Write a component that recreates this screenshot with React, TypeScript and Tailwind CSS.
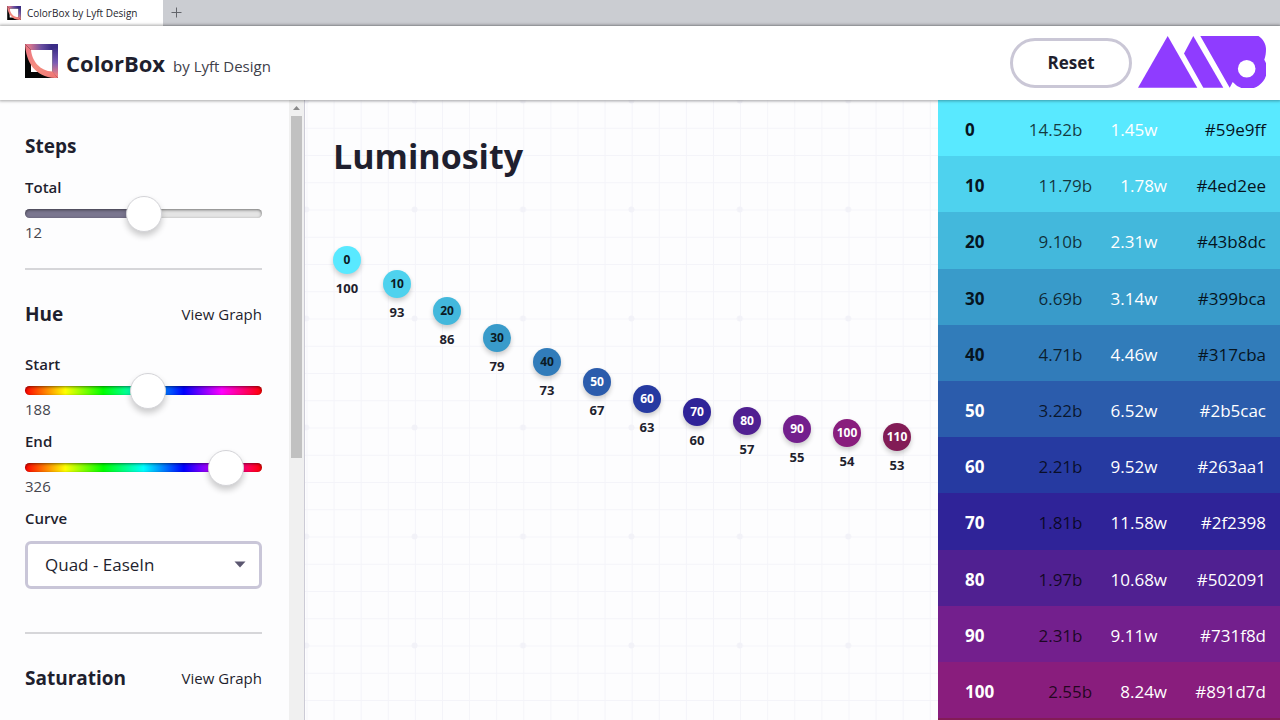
import { useId, useState } from "react";

type Step = {
  name: string;
  value: number;
  x: number;
  y: number;
  hex: string;
  black?: string;
  white?: string;
  light?: boolean;
};

const steps: Step[] = [
  { name: "0", value: 100, x: 42, y: 160, hex: "#59e9ff", black: "14.52", white: "1.45" },
  { name: "10", value: 93, x: 92, y: 184, hex: "#4ed2ee", black: "11.79", white: "1.78" },
  { name: "20", value: 86, x: 142, y: 211, hex: "#43b8dc", black: "9.10", white: "2.31" },
  { name: "30", value: 79, x: 192, y: 238, hex: "#399bca", black: "6.69", white: "3.14" },
  { name: "40", value: 73, x: 242, y: 262, hex: "#317cba", black: "4.71", white: "4.46" },
  { name: "50", value: 67, x: 292, y: 282, hex: "#2b5cac", black: "3.22", white: "6.52", light: true },
  { name: "60", value: 63, x: 342, y: 299, hex: "#263aa1", black: "2.21", white: "9.52", light: true },
  { name: "70", value: 60, x: 392, y: 312, hex: "#2f2398", black: "1.81", white: "11.58", light: true },
  { name: "80", value: 57, x: 442, y: 321, hex: "#502091", black: "1.97", white: "10.68", light: true },
  { name: "90", value: 55, x: 492, y: 329, hex: "#731f8d", black: "2.31", white: "9.11", light: true },
  { name: "100", value: 54, x: 542, y: 333, hex: "#891d7d", black: "2.55", white: "8.24", light: true },
  { name: "110", value: 53, x: 592, y: 337, hex: "#821c56", light: true },
];

function Logo({ className }: { className: string }) {
  const id = useId();
  return (
    <svg viewBox="0 0 33 34" className={className} aria-hidden="true">
      <defs>
        <linearGradient id={`${id}a`} x1="0" y1="0" x2="1" y2="0">
          <stop offset="0.12" stopColor="#e0788c" />
          <stop offset="0.5" stopColor="#6a4fa0" />
          <stop offset="0.8" stopColor="#3a2c86" />
        </linearGradient>
        <linearGradient id={`${id}b`} x1="0" y1="0" x2="0" y2="1">
          <stop offset="0.1" stopColor="#3a2c86" />
          <stop offset="0.55" stopColor="#7a5cb4" />
          <stop offset="0.9" stopColor="#ec7f84" />
        </linearGradient>
        <linearGradient id={`${id}c`} x1="0" y1="0" x2="1" y2="1">
          <stop offset="0" stopColor="#ea7080" />
          <stop offset="0.5" stopColor="#f58e80" />
          <stop offset="1" stopColor="#ee7474" />
        </linearGradient>
      </defs>
      <rect width="33" height="34" fill="#050505" />
      <rect x="6" y="6" width="21.5" height="22" fill="#fff" />
      <path d="M0 0H33V6H6Z" fill={`url(#${id}a)`} />
      <path d="M33 0V34L27.5 28V6Z" fill={`url(#${id}b)`} />
      <path d="M0 0L6 6C7 17 15 27 27.5 27.5L33 34H30C10 33 1 18 0 0Z" fill={`url(#${id}c)`} />
    </svg>
  );
}

function BrandMark() {
  return (
    <svg viewBox="0 0 128 52" className="mb-0.5 h-[52px] w-32 shrink-0" aria-hidden="true">
      <g fill="#8f3cff">
        <path d="M29.7 0L59.3 51.7H0Z" />
        <path d="M55.3 0L85.3 51.7H65.3L46 17.5Z" />
        <path d="M62.3 0H120.5C125 3 128 8 128 13C128 17 127.6 20 126.3 23.7A19.4 19.4 0 0 1 94.7 46L91.7 51.7Z" />
      </g>
      <circle cx="108.7" cy="32.7" r="8.8" fill="#fff" />
    </svg>
  );
}

const trackFills = {
  hue: "bg-[linear-gradient(to_right,#f00,#ff0_17%,#0f0_33%,#0ff_50%,#00f_67%,#f0f_83%,#f00)]",
  plain: "bg-[linear-gradient(to_right,#7a768f_50%,#e4e4e4_50%)]",
};

type SliderProps = {
  label: string;
  initial: number;
  min: number;
  max: number;
  fill: keyof typeof trackFills;
};

function Slider({ label, initial, min, max, fill }: SliderProps) {
  const id = useId();
  const [value, setValue] = useState(initial);
  return (
    <div className="flex flex-col">
      <label htmlFor={id} className="text-[15px] leading-5 font-semibold">
        {label}
      </label>
      <input
        id={id}
        type="range"
        min={min}
        max={max}
        value={value}
        onChange={(e) => setValue(Number(e.target.value))}
        className={`mt-3 block h-[9px] w-full appearance-none rounded-full shadow-[inset_0_1px_3px_rgba(0,0,0,0.5)] outline-none [&::-webkit-slider-thumb]:size-9 [&::-webkit-slider-thumb]:appearance-none [&::-webkit-slider-thumb]:rounded-full [&::-webkit-slider-thumb]:border [&::-webkit-slider-thumb]:border-[#d4d4d8] [&::-webkit-slider-thumb]:bg-white [&::-webkit-slider-thumb]:shadow-[0_4px_6px_rgba(0,0,0,0.2)] ${trackFills[fill]}`}
      />
      <output htmlFor={id} className="mt-1 text-[15px] leading-5 text-[#45454d]">
        {value}
      </output>
    </div>
  );
}

function SectionTitle({ title }: { title: string }) {
  return (
    <div className="flex items-center justify-between">
      <h2 className="text-[19px] leading-6 font-bold">{title}</h2>
      <a href="#graph" className="text-[15px] leading-5 font-medium">
        View Graph
      </a>
    </div>
  );
}

function Sidebar() {
  return (
    <aside className="flex w-[305px] shrink-0 border-r border-[#cccbd6]">
      <div className="flex-1 overflow-hidden pt-[34px] pr-[27px] pl-[25px]">
        <section>
          <h2 className="text-[19px] leading-6 font-bold">Steps</h2>
          <div className="mt-[19px]">
            <Slider label="Total" initial={12} min={3} max={21} fill="plain" />
          </div>
        </section>
        <hr className="mt-[26px] border-t-2 border-[#d6d6d9]" />
        <section className="mt-8">
          <SectionTitle title="Hue" />
          <div className="mt-7 flex flex-col gap-3">
            <Slider label="Start" initial={188} min={0} max={359} fill="hue" />
            <Slider label="End" initial={326} min={0} max={359} fill="hue" />
            <div className="flex flex-col gap-[13px]">
              <label htmlFor="curve" className="text-[15px] leading-5 font-semibold">
                Curve
              </label>
              <div className="relative">
                <select
                  id="curve"
                  className="h-12 w-full appearance-none rounded-md border-3 border-[#c9c6d8] bg-white px-[17px] text-[17px] leading-6"
                >
                  <option>Quad - EaseIn</option>
                  <option>Quad - EaseOut</option>
                  <option>Linear</option>
                </select>
                <svg
                  viewBox="0 0 12 7"
                  className="pointer-events-none absolute top-5 right-4 h-[7px] w-3"
                  aria-hidden="true"
                >
                  <path d="M0.5 0.5H11.5L6 6.5Z" fill="#5b5770" />
                </svg>
              </div>
            </div>
          </div>
        </section>
        <hr className="mt-[43px] border-t-2 border-[#d6d6d9]" />
        <section className="mt-8">
          <SectionTitle title="Saturation" />
        </section>
      </div>
      <div className="flex w-[15px] shrink-0 flex-col items-center bg-[#f0f0f0]" aria-hidden="true">
        <svg viewBox="0 0 15 16" className="h-4 w-[15px]">
          <path d="M4 10L7.5 6L11 10Z" fill="#8a8a8a" />
        </svg>
        <div className="h-[342px] w-[11px] bg-[#c1c1c1]" />
      </div>
    </aside>
  );
}

function Graph() {
  return (
    <section id="graph" className="relative min-w-0 flex-1 overflow-hidden">
      <svg className="absolute inset-0 size-full" aria-hidden="true">
        <defs>
          <pattern id="minor" x="1.5" y="0.5" width="27.1" height="27.25" patternUnits="userSpaceOnUse">
            <path d="M0 0.5H28M0.5 0V28" stroke="#f4f4f9" fill="none" />
          </pattern>
          <pattern id="major" x="-53" y="55" width="108.4" height="109" patternUnits="userSpaceOnUse">
            <circle cx="54.2" cy="54.5" r="3" fill="#f2f2f8" />
          </pattern>
        </defs>
        <rect width="100%" height="100%" fill="url(#minor)" />
        <rect width="100%" height="100%" fill="url(#major)" />
      </svg>
      <h1 className="relative px-7 pt-[34px] text-[34px] leading-11 font-bold">Luminosity</h1>
      {steps.map((s) => (
        <div
          key={s.name}
          className="absolute flex w-9 -translate-x-1/2 flex-col items-center"
          style={{ left: s.x, top: s.y - 14 }}
        >
          <span
            className={`flex size-7 items-center justify-center rounded-full text-xs font-bold shadow-[0_3px_5px_rgba(0,0,0,0.2)] ${s.light ? "text-white" : "text-[#0b1a24]"}`}
            style={{ backgroundColor: s.hex }}
          >
            {s.name}
          </span>
          <span className="mt-1 text-[13px] leading-5 font-bold">{s.value}</span>
        </div>
      ))}
    </section>
  );
}

function Swatches() {
  return (
    <ul className="flex w-[342px] shrink-0 flex-col bg-[#821c56] pb-0.5">
      {steps
        .filter((s) => s.black)
        .map((s) => (
          <li
            key={s.name}
            className={`flex min-h-14 flex-1 items-center pt-1 pr-3.5 pl-[27px] text-[17px] leading-6 ${s.light ? "text-white" : "text-[#06141f]"}`}
            style={{ backgroundColor: s.hex }}
          >
            <span className="font-bold">{s.name}</span>
            <span className="ml-[54px] text-black/75">{s.black}b</span>
            <span className="ml-7 text-white">{s.white}w</span>
            <span className="ml-auto">{s.hex}</span>
          </li>
        ))}
    </ul>
  );
}

export default function App() {
  return (
    <div className="flex h-screen flex-col overflow-hidden bg-[#fdfdfe] font-['Open_Sans','Noto_Sans',sans-serif] text-[#1f1f2e]">
      <div className="flex h-[26px] shrink-0 items-stretch border-b border-[#bfc1c6] bg-[#cbcdd2]">
        <div className="-mb-px flex w-[163px] items-center gap-1.5 bg-white pl-[7px] text-[10px]">
          <Logo className="size-3.5" />
          <span>ColorBox by Lyft Design</span>
        </div>
        <button aria-label="New tab" className="flex w-[27px] items-center justify-center">
          <svg viewBox="0 0 11 11" className="size-[11px]" aria-hidden="true">
            <path d="M5.5 0.5V10.5M0.5 5.5H10.5" stroke="#62646a" fill="none" />
          </svg>
        </button>
      </div>
      <header className="relative z-10 flex h-[74px] shrink-0 items-center bg-white pr-3.5 pl-[25px] shadow-[0_0_3px_1px_rgba(0,0,0,0.35)]">
        <Logo className="mb-1 h-[34px] w-[33px]" />
        <div className="ml-2 flex items-baseline gap-2">
          <span className="text-[22px] font-bold">ColorBox</span>
          <span className="text-[15px] text-[#40404a]">by Lyft Design</span>
        </div>
        <button className="mr-1.5 ml-auto h-[50px] w-[122px] rounded-full border-3 border-[#cac7d6] text-[17px] font-bold">
          Reset
        </button>
        <BrandMark />
      </header>
      <main className="flex min-h-0 flex-1">
        <Sidebar />
        <Graph />
        <Swatches />
      </main>
    </div>
  );
}
